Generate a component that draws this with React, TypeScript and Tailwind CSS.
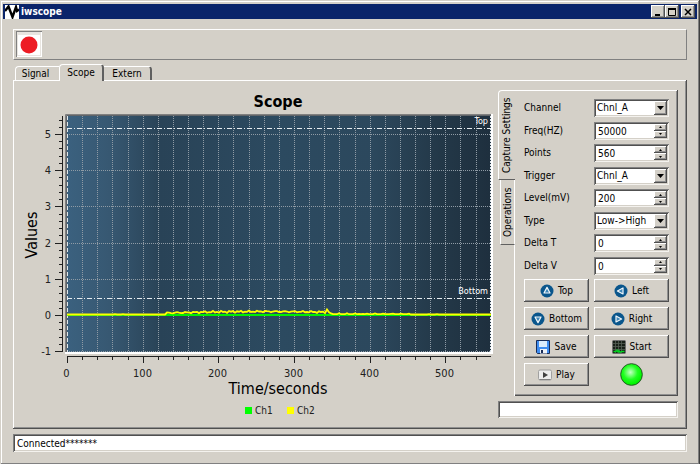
import React, { useState } from "react";

const raised =
  "bg-[#d4d0c8] shadow-[inset_-1px_-1px_0_#505050,inset_1px_1px_0_#ffffff,inset_-2px_-2px_0_#909090]";
const sunken =
  "bg-white shadow-[inset_1px_1px_0_#808080,inset_-1px_-1px_0_#f4f2ee,inset_2px_2px_0_#505050,inset_-2px_-2px_0_#d4d0c8]";

/* ─── chart geometry ─── */
const X0 = 67;
const X1 = 491;
const Y0 = 116;
const Y1 = 352;
const px = (v: number) => Math.round(X0 + v * 0.7567) + 0.5;
const py = (v: number) => Math.round(315 - v * 36.2) + 0.5;

const xMinor = Array.from({ length: 28 }, (_, i) => i * 20);
const yMinor = Array.from({ length: 33 }, (_, i) => -1 + i * 0.2);
const yMajor = [-1, 0, 1, 2, 3, 4, 5];

const wave = Array.from({ length: 213 }, (_, i) => {
  const x = 67 + i * 2;
  const noise = Math.sin(i * 2.3) * Math.cos(i * 0.9);
  let lift = Math.max(0, noise - 0.6);
  if (x > 165 && x < 330) {
    const bump = 3 * Math.sin(((x - 120) / 290) * Math.PI);
    lift = bump + noise * 1.1;
  } else if (x >= 330 && x < 410) {
    lift = 0.3 + Math.max(0, noise);
  }
  if (x === 327) lift = 5;
  return `${x},${(314.5 - lift).toFixed(1)}`;
}).join(" ");

const ScopeChart = () => (
  <svg
    viewBox="14 81 484 340"
    className="block w-full h-auto font-['DejaVu_Sans_Condensed','DejaVu_Sans',sans-serif]"
    role="img"
    aria-label="Scope"
  >
    <defs>
      <linearGradient id="canvas" x1="0" x2="1" y1="0" y2="0">
        <stop offset="0" stopColor="#3b617f" />
        <stop offset="0.1" stopColor="#375872" />
        <stop offset="0.22" stopColor="#294357" />
        <stop offset="0.5" stopColor="#2c4a60" />
        <stop offset="0.72" stopColor="#2c485d" />
        <stop offset="0.88" stopColor="#233848" />
        <stop offset="1" stopColor="#1e2f3e" />
      </linearGradient>
    </defs>

    <text x="278" y="107" textAnchor="middle" className="text-[16px] font-bold">
      Scope
    </text>

    {/* sunken canvas frame */}
    <path d="M65.5 354V114.5H492" fill="none" stroke="#808080" />
    <path d="M66.5 353V115.5H491" fill="none" stroke="#606468" />
    <path d="M65 353H492V114" fill="none" stroke="#fff" strokeWidth="2" />
    <rect x={X0} y={Y0} width={X1 - X0} height={Y1 - Y0} fill="url(#canvas)" />

    {/* grid */}
    <g stroke="#8f9ba5" strokeDasharray="1 1">
      {xMinor.slice(1).map((v) => (
        <line key={v} x1={px(v)} x2={px(v)} y1={Y0} y2={Y1} />
      ))}
      {yMajor.map((v) => (
        <line key={v} x1={X0} x2={X1} y1={py(v)} y2={py(v)} />
      ))}
    </g>
    <path d="M67.5 116V352" stroke="#dfe6ea" strokeDasharray="4 2" />
    <path d="M490.5 116V352" stroke="#dfe6ea" strokeDasharray="2 1" />

    {/* markers */}
    <g stroke="#e8eef2" strokeDasharray="5 2 1 2">
      <line x1={X0} x2={X1} y1="128.5" y2="128.5" />
      <line x1={X0} x2={X1} y1="298.5" y2="298.5" />
    </g>
    <g fill="#fff" textAnchor="end" className="text-[9px]">
      <text x="488" y="124">Top</text>
      <text x="488" y="294">Bottom</text>
    </g>

    <line x1={X0} x2={X1} y1="315" y2="315" stroke="#00f000" strokeWidth="2" />
    <polyline points={wave} fill="none" stroke="#ffff00" strokeWidth="1.8" />

    {/* left axis */}
    <g stroke="#202020">
      <path d="M62.5 116V352" />
      {yMinor.map((v, i) => (
        <line key={i} x1="59" x2="62" y1={py(v)} y2={py(v)} />
      ))}
      {yMajor.map((v) => (
        <line key={v} x1="55" x2="62" y1={py(v)} y2={py(v)} />
      ))}
    </g>
    <g textAnchor="end" className="text-[11px]" fill="#202020">
      {yMajor.map((v) => (
        <text key={v} x="51" y={py(v) + 3.5}>{v}</text>
      ))}
    </g>
    <text
      transform="translate(37 235) rotate(-90)"
      textAnchor="middle"
      className="text-[16px]"
    >
      Values
    </text>

    {/* bottom axis */}
    <g stroke="#202020">
      <path d="M67 356.5H491" />
      {xMinor.map((v) => (
        <line key={v} x1={px(v)} x2={px(v)} y1="357" y2={v % 100 ? 360 : 363} />
      ))}
    </g>
    <g textAnchor="middle" className="text-[11px]" fill="#202020">
      {[0, 100, 200, 300, 400, 500].map((v) => (
        <text key={v} x={px(v) - 1} y="377">{v}</text>
      ))}
    </g>
    <text x="278" y="394" textAnchor="middle" className="text-[16px]">
      Time/seconds
    </text>

    {/* legend */}
    <rect x="245" y="407" width="7" height="7" fill="#00ff00" />
    <rect x="287" y="407" width="7" height="7" fill="#ffff00" />
    <g className="text-[10px]" fill="#202020">
      <text x="255" y="414">Ch1</text>
      <text x="297" y="414">Ch2</text>
    </g>
  </svg>
);

/* ─── form rows ─── */
interface FieldProps {
  id: string;
  label: string;
  value: string;
}

const Row: React.FC<{ id: string; label: string; children: React.ReactNode }> = ({
  id,
  label,
  children,
}) => (
  <div className="grid grid-cols-[65px_1fr] gap-x-[5px] items-center">
    <label htmlFor={id}>{label}</label>
    <div className={`relative h-[18px] ${sunken}`}>{children}</div>
  </div>
);

const Combo: React.FC<FieldProps & { options: string[] }> = ({
  id,
  label,
  value,
  options,
}) => (
  <Row id={id} label={label}>
    <select
      id={id}
      defaultValue={value}
      className="appearance-none w-full h-full pl-[3px] outline-none"
    >
      {options.map((o) => (
        <option key={o}>{o}</option>
      ))}
    </select>
    <span
      className={`absolute right-[2px] inset-y-[2px] w-[13px] flex items-center justify-center pointer-events-none ${raised}`}
    >
      <svg viewBox="0 0 7 4" className="w-[7px] h-1">
        <path d="M0 0H7L3.5 4Z" />
      </svg>
    </span>
  </Row>
);

const Spin: React.FC<FieldProps> = ({ id, label, value }) => {
  const [val, setVal] = useState(value);
  const step = (d: number) => setVal(String(Number(val) + d));

  return (
    <Row id={id} label={label}>
      <input
        id={id}
        value={val}
        onChange={(e) => setVal(e.target.value)}
        className="w-full h-full pl-1 pr-4 pt-px outline-none"
      />
      <span className="absolute right-[2px] inset-y-[2px] w-[13px] flex flex-col">
        <button
          aria-label={`${label} up`}
          onClick={() => step(1)}
          className={`flex-1 flex items-center justify-center ${raised}`}
        >
          <svg viewBox="0 0 3 2" className="w-[3px] h-[2px]">
            <path d="M0 2H3L1.5 0Z" />
          </svg>
        </button>
        <button
          aria-label={`${label} down`}
          onClick={() => step(-1)}
          className={`flex-1 flex items-center justify-center ${raised}`}
        >
          <svg viewBox="0 0 3 2" className="w-[3px] h-[2px]">
            <path d="M0 0H3L1.5 2Z" />
          </svg>
        </button>
      </span>
    </Row>
  );
};

/* ─── icons ─── */
const arrows = {
  up: "M7 3.4L10 9H4Z",
  down: "M7 10.6L10 5H4Z",
  left: "M3.4 7L9 4V10Z",
  right: "M10.6 7L5 4V10Z",
};

const ArrowIcon = ({ dir }: { dir: keyof typeof arrows }) => (
  <svg viewBox="0 0 14 14" className="w-[14px] h-[14px]">
    <circle cx="7" cy="7" r="6.5" fill="#0a568c" />
    <path
      d={arrows[dir]}
      fill="#3d86b8"
      stroke="#f0f6fa"
      strokeWidth="1.2"
      strokeLinejoin="round"
    />
  </svg>
);

const SaveIcon = () => (
  <svg viewBox="0 0 14 14" className="w-[14px] h-[14px]">
    <path d="M0.5 0.5H13.5V13.5H1.5L0.5 12.5Z" fill="#3f8df0" stroke="#182c58" />
    <rect x="3" y="1" width="8" height="6" fill="#dcecfc" />
    <rect x="4" y="9" width="7" height="4.5" fill="#eef2f8" />
    <rect x="5" y="10" width="2" height="3" fill="#182c58" />
  </svg>
);

const StartIcon = () => (
  <svg viewBox="0 0 14 14" className="w-[14px] h-[14px]">
    <rect x="0.5" y="0.5" width="13" height="13" rx="1" fill="#182018" stroke="#707070" />
    <path
      d="M3.5 1V13M6.5 1V13M9.5 1V13M1 3.5H13M1 6.5H13M1 9.5H13"
      stroke="#566056"
      strokeWidth="0.8"
    />
    <path d="M1.500 11.500H4L5 10L6 12L7 10.500L8 12.500L9.500 11.500H12.500" fill="none" stroke="#00d820" strokeWidth="1.3" />
  </svg>
);

const PlayIcon = () => (
  <svg viewBox="0 0 14 12" className="w-[14px] h-3">
    <rect x="0.5" y="1" width="13" height="10" rx="1.5" fill="#ececec" stroke="#a0a0a0" />
    <path d="M1.5 10.5H12.5" stroke="#808080" />
    <path d="M5 3L10 6L5 9Z" fill="#404040" />
  </svg>
);

const actions = [
  { label: "Top", icon: <ArrowIcon dir="up" /> },
  { label: "Left", icon: <ArrowIcon dir="left" /> },
  { label: "Bottom", icon: <ArrowIcon dir="down" /> },
  { label: "Right", icon: <ArrowIcon dir="right" /> },
  { label: "Save", icon: <SaveIcon /> },
  { label: "Start", icon: <StartIcon /> },
  { label: "Play", icon: <PlayIcon /> },
];

const CaptureSettings = () => (
  <div className="flex-1 px-[9px] pt-[9px] pb-[10px] shadow-[inset_-1px_-1px_0_#505050,inset_0_1px_0_#ffffff,inset_-2px_-2px_0_#909090]">
    <div className="h-44 flex flex-col justify-between">
      <Combo id="channel" label="Channel" value="Chnl_A" options={["Chnl_A", "Chnl_B"]} />
      <Spin id="freq" label="Freq(HZ)" value="50000" />
      <Spin id="points" label="Points" value="560" />
      <Combo id="trigger" label="Trigger" value="Chnl_A" options={["Chnl_A", "Chnl_B"]} />
      <Spin id="level" label="Level(mV)" value="200" />
      <Combo id="type" label="Type" value="Low->High" options={["Low->High", "High->Low"]} />
      <Spin id="delta-t" label="Delta T" value="0" />
      <Spin id="delta-v" label="Delta V" value="0" />
    </div>

    <div className="mt-1 grid grid-cols-[65px_1fr] gap-[5px]">
      {actions.map((a) => (
        <button
          key={a.label}
          className={`h-[23px] flex items-center justify-center gap-1 ${raised}`}
        >
          {a.icon}
          {a.label}
        </button>
      ))}
      <svg viewBox="0 0 24 24" className="w-[23px] h-[23px] place-self-center">
        <defs>
          <radialGradient id="led" cx="0.45" cy="0.4" r="0.55">
            <stop offset="0" stopColor="#c4ffc4" />
            <stop offset="0.6" stopColor="#20ff20" />
            <stop offset="1" stopColor="#00f400" />
          </radialGradient>
        </defs>
        <circle cx="12" cy="12" r="11.3" fill="url(#led)" stroke="#285028" />
      </svg>
    </div>
  </div>
);

const sideTab = "[writing-mode:vertical-rl] rotate-180 flex items-center justify-center";

const titleButton = `w-[14px] h-[13px] flex items-center justify-center ${raised}`;

const App: React.FC = () => (
  <div className="min-h-screen flex flex-col bg-[#d4d0c8] p-[3px] pt-1 text-[10px] leading-3 text-black font-['DejaVu_Sans_Condensed','DejaVu_Sans',sans-serif] shadow-[inset_-1px_-1px_0_#404040,inset_1px_1px_0_#d4d0c8,inset_-2px_-2px_0_#808080,inset_2px_2px_0_#ffffff]">
    {/* title bar */}
    <header className="h-[15px] bg-[#0a246a] flex items-center px-[2px] text-white">
      <svg viewBox="0 0 14 14" className="w-[14px] h-[14px]">
        <rect width="14" height="14" fill="#fff" />
        <path d="M0 6L3.5 1.5L7.5 12L11 2L12 6L14 4.5" fill="none" stroke="#000" strokeWidth="2.4" />
      </svg>
      <h1 className="pl-[2px] text-[10px] font-bold">iwscope</h1>
      <div className="ml-auto flex">
        <button aria-label="Minimize" className={titleButton}>
          <svg viewBox="0 0 8 8" className="w-2 h-2">
            <path d="M1 7H6" stroke="#000" strokeWidth="2" />
          </svg>
        </button>
        <button aria-label="Maximize" className={titleButton}>
          <svg viewBox="0 0 8 8" className="w-2 h-2">
            <path d="M0.5 1V7.5H7.5V1" fill="none" stroke="#000" />
            <path d="M0 1H8" stroke="#000" strokeWidth="2" />
          </svg>
        </button>
        <button aria-label="Close" className={`ml-[2px] ${titleButton}`}>
          <svg viewBox="0 0 8 8" className="w-2 h-2">
            <path d="M1 1L7 7M7 1L1 7" stroke="#000" strokeWidth="1.5" />
          </svg>
        </button>
      </div>
    </header>

    <main className="flex-1 flex flex-col px-[10px] pt-[10px] pb-[10px]">
      {/* toolbar */}
      <div className="px-[2px] pt-px pb-[2px] border border-t-white border-l-white border-r-[#808080] border-b-[#808080]">
        <button
          aria-label="Record"
          className="w-[26px] h-[26px] flex items-center justify-center bg-[#e8e5e0] shadow-[inset_1px_1px_0_#808080,inset_-1px_-1px_0_#ffffff]"
        >
          <svg viewBox="0 0 22 22" className="w-[22px] h-[22px]">
            <rect y="2" width="22" height="20" fill="#fff" />
            <circle cx="11" cy="12" r="8.5" fill="#ed1c24" />
          </svg>
        </button>
      </div>

      {/* tabs */}
      <div className="relative z-10 flex items-end mt-1 pl-[2px] -mb-px" role="tablist">
        <button
          role="tab"
          className="w-11 h-[14px] mb-px pr-1 border-t border-l border-white rounded-tl-sm"
        >
          Signal
        </button>
        <button
          role="tab"
          aria-selected
          className="w-[45px] h-[17px] bg-[#d4d0c8] border-t border-l border-t-white border-l-white border-r-2 border-r-[#606060] rounded-t-sm"
        >
          Scope
        </button>
        <button
          role="tab"
          className="w-12 h-[14px] mb-px border-t border-t-white border-r-2 border-r-[#606060] rounded-tr-sm"
        >
          Extern
        </button>
      </div>

      <div className="flex-1 flex items-start pl-px pt-px pr-[9px] pb-2 shadow-[inset_-1px_-1px_0_#505050,inset_1px_1px_0_#ffffff,inset_-2px_-2px_0_#909090]">
        <div className="flex-1 min-w-0">
          <ScopeChart />
        </div>

        <aside className="w-[180px] pt-[9px] flex flex-col gap-[5px]">
          <div className="flex">
            {/* the tabs are turned by 180deg, so their borders are too */}
            <div className="flex flex-col items-end w-[17px]" role="tablist">
              <button
                role="tab"
                aria-selected
                className={`${sideTab} w-[17px] h-[90px] border-r border-b border-t border-r-white border-b-white border-t-[#606060] rounded-br-sm`}
              >
                Capture Settings
              </button>
              <button
                role="tab"
                className={`${sideTab} w-[15px] h-[65px] border-r border-l border-t border-r-white border-l-white border-t-[#606060]`}
              >
                Operations
              </button>
              <div className="flex-1 w-px bg-white" />
            </div>
            <CaptureSettings />
          </div>
          <input aria-label="Message" className={`w-full h-[17px] px-1 outline-none ${sunken}`} />
        </aside>
      </div>

      <input
        aria-label="Status"
        readOnly
        defaultValue="Connected*******"
        className={`mt-[5px] w-full h-[18px] px-1 outline-none ${sunken}`}
      />
    </main>
  </div>
);

export default App;
